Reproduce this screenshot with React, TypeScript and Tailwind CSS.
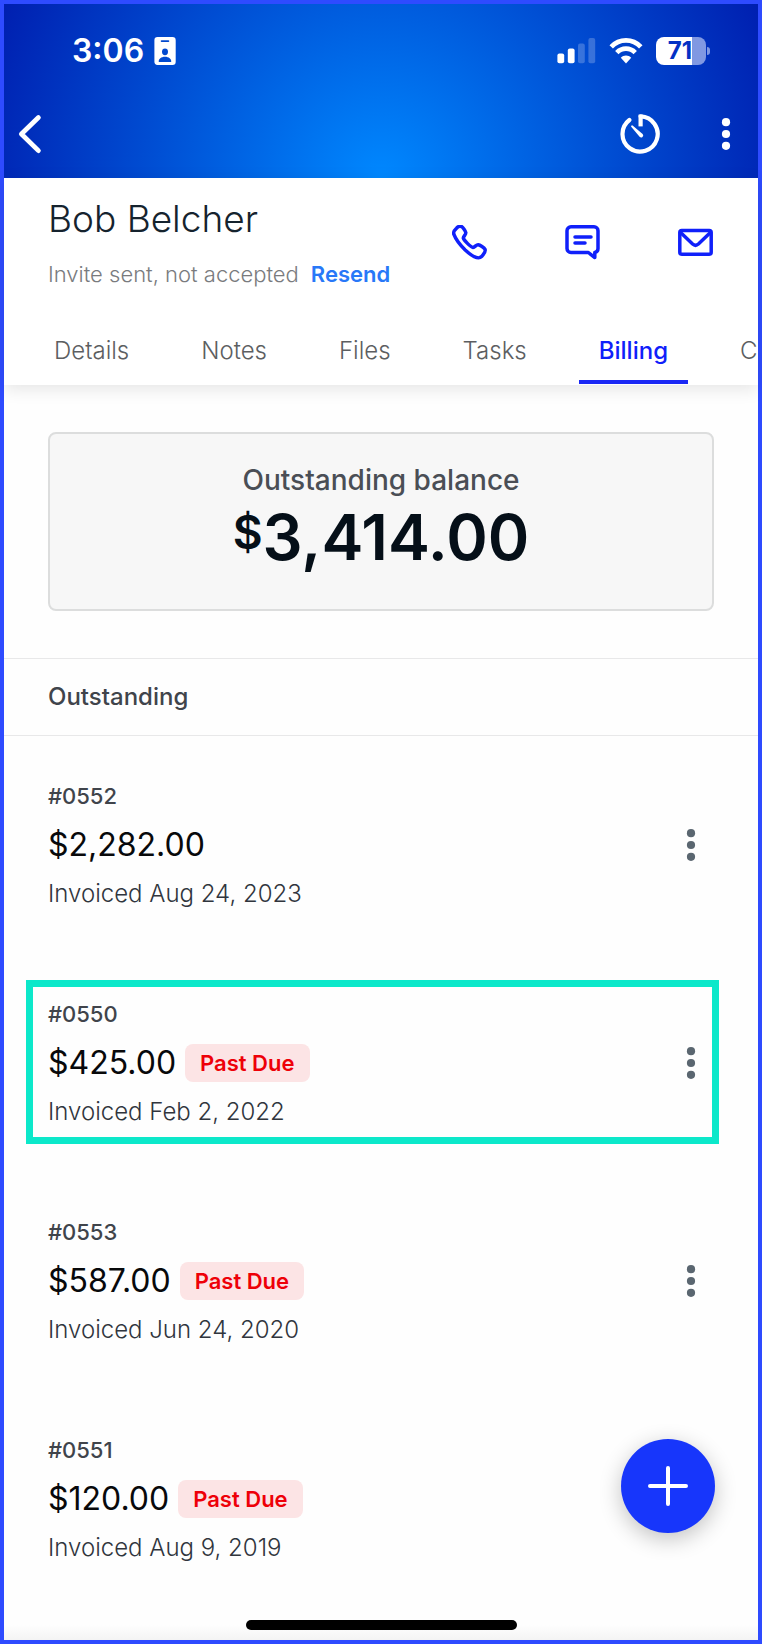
const contactActions = [
  {
    label: 'Call',
    href: '#call',
    icon: (
      <path d="M4.5 3.2 C6 1.6 8 .8 9.6 1.6 C11 2.4 13.4 6 13.8 7.6 C14.2 9.2 11.2 11.6 11.3 13 C12 15.4 18.4 21.8 20.8 22.4 C22.2 22.5 24.4 19.6 26.2 19.8 C28 20 32.2 22.6 33 24.2 C33.8 26 31.2 29.8 29.6 31.6 C26.6 34.6 20.6 31.8 13.2 25 C7 19 3.4 13.4 1.8 9.2 C1 6.8 2.6 5 4.5 3.2 Z" />
    ),
  },
  {
    label: 'Message',
    href: '#message',
    icon: (
      <>
        <path d="M6 1.8 H29 A4 4 0 0 1 33 5.8 V23.5 A4 4 0 0 1 29.8 27.4 V32.6 L23.4 27.5 H6 A4 4 0 0 1 2 23.5 V5.8 A4 4 0 0 1 6 1.8 Z" />
        <path d="M10 12 H26 M10 18 H20" />
      </>
    ),
  },
  {
    label: 'Email',
    href: '#email',
    icon: (
      <>
        <rect x="1.8" y="5.6" width="31.4" height="23.6" rx="2" />
        <path d="M2.6 7.6 L14.6 19 Q17.5 21.6 20.4 19 L32.4 7.6" />
      </>
    ),
  },
]

const tabs = ['Details', 'Notes', 'Files', 'Tasks', 'Billing', 'C']

const invoices = [
  { id: '#0552', amount: '$2,282.00', date: 'Invoiced Aug 24, 2023', pastDue: false, highlighted: false },
  { id: '#0550', amount: '$425.00', date: 'Invoiced Feb 2, 2022', pastDue: true, highlighted: true },
  { id: '#0553', amount: '$587.00', date: 'Invoiced Jun 24, 2020', pastDue: true, highlighted: false },
  { id: '#0551', amount: '$120.00', date: 'Invoiced Aug 9, 2019', pastDue: true, highlighted: false },
]

function Dots() {
  return (
    <svg className="w-3 h-8" viewBox="0 0 12 32" fill="currentColor" aria-hidden="true">
      <circle cx="6" cy="4.2" r="4.1" />
      <circle cx="6" cy="16" r="4.1" />
      <circle cx="6" cy="27.8" r="4.1" />
    </svg>
  )
}

function StatusBar() {
  return (
    <div className="flex items-center justify-between h-7 mt-[33px] pl-[68px] pr-12">
      <div className="flex items-center gap-[10px]">
        <span className="text-[32px] leading-7 font-semibold">3:06</span>
        <svg className="w-[22px] h-7" viewBox="0 0 22 28" aria-hidden="true">
          <path
            fill="currentColor"
            fillRule="evenodd"
            d="M3.5 0 H18.5 A3.2 3.2 0 0 1 21.7 3.2 V24.8 A3.2 3.2 0 0 1 18.5 28 H3.5 A3.2 3.2 0 0 1 .4 24.8 V3.2 A3.2 3.2 0 0 1 3.5 0 Z M7.6 3.2 A.9 .9 0 0 0 7.6 5 H14.4 A.9 .9 0 0 0 14.4 3.2 Z M11 11.4 A3 3.4 0 0 0 11 18.2 A3 3.4 0 0 0 11 11.4 Z M4.8 25 H17.2 C17.6 22 14.8 19.8 11 19.8 C7.2 19.8 4.4 22 4.8 25 Z"
          />
        </svg>
      </div>

      <div className="flex items-center">
        <svg className="w-[39px] h-7" viewBox="0 0 39 28" fill="currentColor" aria-hidden="true">
          <rect x=".4" y="16.4" width="6.8" height="9.8" rx="2" />
          <rect x="10.8" y="11.4" width="6.8" height="14.8" rx="2" />
          <rect x="21" y="6.6" width="6.8" height="19.6" rx="2" opacity=".22" />
          <rect x="31.4" y="1" width="6.8" height="25.2" rx="2" opacity=".22" />
        </svg>
        <svg className="w-[34px] h-7 ml-[13px]" viewBox="0 0 34 28" aria-hidden="true">
          <g fill="none" stroke="currentColor" strokeWidth="4.8">
            <path d="M2.2 9.8 C10.4 1.2 23.6 1.2 31.8 9.8" />
            <path d="M7.8 15.6 C13 10.4 21 10.4 26.2 15.6" />
          </g>
          <path fill="currentColor" d="M17 26.4 L11.8 20.8 C14.6 17.6 19.4 17.6 22.2 20.8 Z" />
        </svg>
        <div className="flex items-center ml-[13px]">
          <div className="flex items-center justify-center w-[50px] h-7 pr-0.5 rounded-lg bg-linear-to-r from-white from-72% to-[#8098e2] to-72%">
            <span className="text-2xl leading-7 font-bold text-[#0331c4]">71</span>
          </div>
          <div className="w-[3px] h-2 ml-px rounded-r-full bg-[#8098e2]" />
        </div>
      </div>
    </div>
  )
}

function Header() {
  return (
    <header className="flex flex-col h-[174px] text-white bg-[radial-gradient(circle_at_50%_100%,#0088ff_0,#001fb0_415px)]">
      <StatusBar />
      <nav className="flex items-center justify-between h-12 mt-[45px] pl-[13px] pr-[26px]">
        <button type="button" aria-label="Back">
          <svg className="w-7 h-10" viewBox="0 0 28 40" fill="none" stroke="currentColor" strokeWidth="4.8" strokeLinecap="round" strokeLinejoin="round" aria-hidden="true">
            <path d="M21.4 3.6 L4.4 20 L21.4 36.6" />
          </svg>
        </button>
        <div className="flex items-center gap-[60px]">
          <button type="button" aria-label="Timer">
            <svg className="w-10 h-10" viewBox="0 0 40 40" fill="none" stroke="currentColor" strokeWidth="4.2" strokeLinejoin="round" aria-hidden="true">
              <path strokeLinecap="round" d="M9.4 6 A17.6 17.6 0 1 0 20.6 2.4" />
              <path d="M20.6 .6 V12.4" />
              <path fill="currentColor" stroke="none" d="M12.6 11.6 L22.6 20 A2 2 0 0 1 19.6 22.8 L11.4 13 A.9 .9 0 0 1 12.6 11.6 Z" />
            </svg>
          </button>
          <button type="button" aria-label="More options">
            <Dots />
          </button>
        </div>
      </nav>
    </header>
  )
}

function Profile() {
  return (
    <section className="relative pb-px bg-white shadow-[0_4px_16px_rgba(0,0,0,0.1)]">
      <div className="flex justify-between pt-[19px] pl-11 pr-[45px]">
        <div>
          <h1 className="text-[37px] leading-[44px] font-light text-[#15232e]">Bob Belcher</h1>
          <p className="mt-[19px] mb-px text-[22px] leading-7 font-light text-[#797b7e]">
            Invite sent, not accepted
            <a href="#resend" className="ml-3 font-semibold text-[#2878f8]">Resend</a>
          </p>
        </div>
        <div className="flex gap-[78px] h-9 mt-7">
          {contactActions.map((a) => (
            <a key={a.label} href={a.href} aria-label={a.label} className="text-[#1020fa]">
              <svg className="w-[35px] h-[35px]" viewBox="0 0 35 35" fill="none" stroke="currentColor" strokeWidth="3.5" strokeLinecap="round" strokeLinejoin="round" aria-hidden="true">
                {a.icon}
              </svg>
            </a>
          ))}
        </div>
      </div>

      <div role="tablist" className="flex gap-8 mt-[29px] pl-[30px] overflow-hidden">
        {tabs.map((tab) => (
          <button
            key={tab}
            type="button"
            role="tab"
            aria-selected={tab === 'Billing'}
            className={
              tab === 'Billing'
                ? 'shrink-0 px-5 pt-4 pb-3 text-2xl leading-[34px] font-medium text-[#1020fa] border-b-4 border-[#1a28f5]'
                : 'shrink-0 px-5 pt-4 pb-3 text-2xl leading-[34px] font-light text-[#5c5e61] border-b-4 border-transparent'
            }
          >
            {tab}
          </button>
        ))}
      </div>
    </section>
  )
}

function Balance() {
  return (
    <section className="mx-11 mt-[47px] h-[179px] flex flex-col items-center pt-[30px] rounded-lg border-2 border-[#dcdddd] bg-[#f7f7f7]">
      <h2 className="text-[28px] leading-8 font-medium text-[#4a4e55]">Outstanding balance</h2>
      <p className="flex items-start mt-[5px] text-[63px] leading-[72px] font-semibold text-[#050f18]">
        <span className="text-[46px] leading-[62px]">$</span>
        3,414.00
      </p>
    </section>
  )
}

function Invoice({ invoice }: { invoice: (typeof invoices)[number] }) {
  return (
    <li className="relative flex items-center justify-between h-[218px] pl-11 pr-[61px]">
      {invoice.highlighted && (
        <div className="absolute left-[22px] right-[39px] top-[26px] h-[164px] border-[7px] border-[#0ce8ca] pointer-events-none" />
      )}
      <div className="flex flex-col gap-[15px]">
        <p className="text-[22px] leading-7 font-medium text-[#40444b]">{invoice.id}</p>
        <div className="flex items-center gap-[9px] h-10">
          <span className="text-[32px] leading-10 text-[#08090b]">{invoice.amount}</span>
          {invoice.pastDue && (
            <span className="px-[15px] text-[22px] leading-[38px] font-semibold text-[#ee0008] bg-[#fce4e5] rounded-lg">
              Past Due
            </span>
          )}
        </div>
        <p className="text-2xl leading-7 font-light text-[#30353d]">{invoice.date}</p>
      </div>
      <button type="button" aria-label={`Options for ${invoice.id}`} className="text-[#5a6670]">
        <Dots />
      </button>
    </li>
  )
}

export default function App() {
  return (
    <div className="relative flex flex-col w-full min-h-screen border-4 border-[#2e4bff] bg-[#fefefe] font-['Inter',sans-serif]">
      <Header />
      <Profile />
      <main>
        <Balance />
        <h2 className="mt-[47px] px-11 border-y border-[#e8e8e9] text-2xl leading-[76px] font-medium text-[#40444b]">
          Outstanding
        </h2>
        <ul>
          {invoices.map((invoice) => (
            <Invoice key={invoice.id} invoice={invoice} />
          ))}
        </ul>
      </main>

      <footer className="flex justify-center pt-2.5 pb-[10px] mt-auto bg-linear-to-t from-[#f4f4f4] to-transparent to-50%">
        <div className="w-[271px] h-[10px] rounded-full bg-black" />
      </footer>

      <button
        type="button"
        aria-label="Add"
        className="absolute right-[43px] bottom-[107px] flex items-center justify-center w-[94px] h-[94px] rounded-full bg-[#1736fb] text-white shadow-[0_6px_22px_rgba(0,0,0,0.24)]"
      >
        <svg className="w-10 h-10" viewBox="0 0 40 40" fill="none" stroke="currentColor" strokeWidth="4" strokeLinecap="round" aria-hidden="true">
          <path d="M20 2 V38 M2 20 H38" />
        </svg>
      </button>
    </div>
  )
}
